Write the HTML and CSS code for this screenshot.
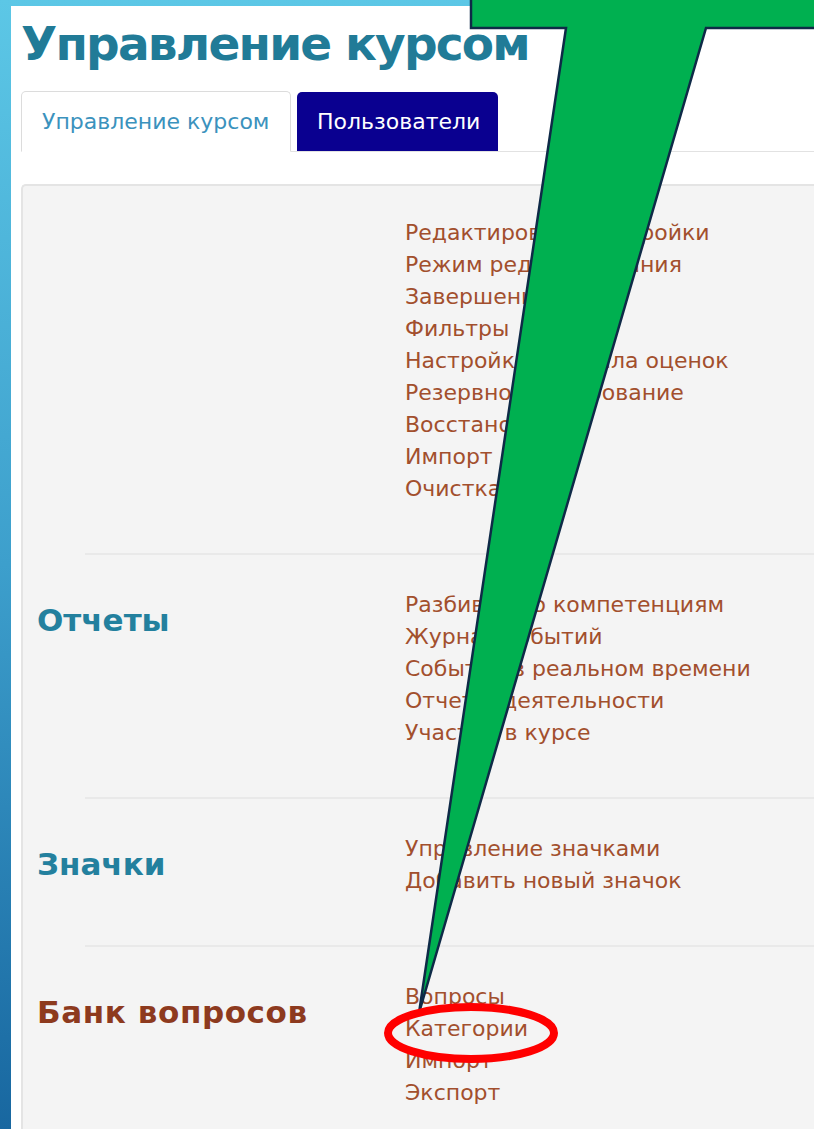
FILE: index.html
```html
<!DOCTYPE html>
<html lang="ru">
<head>
<meta charset="utf-8">
<title>Управление курсом</title>
<link rel="stylesheet" href="styles.css">
</head>
<body>
<div class="page">
  <h1 class="page-title">Управление курсом</h1>

  <nav class="tabs">
    <a class="tab tab-active" href="#">Управление курсом</a>
    <a class="tab tab-dark" href="#">Пользователи</a>
  </nav>

  <div class="panel">
    <section class="group group-first">
      <h3 class="group-head"></h3>
      <ul class="links">
        <li><a href="#">Редактировать настройки</a></li>
        <li><a href="#">Режим редактирования</a></li>
        <li><a href="#">Завершение курса</a></li>
        <li><a href="#">Фильтры</a></li>
        <li><a href="#">Настройки журнала оценок</a></li>
        <li><a href="#">Резервное копирование</a></li>
        <li><a href="#">Восстановить</a></li>
        <li><a href="#">Импорт</a></li>
        <li><a href="#">Очистка</a></li>
      </ul>
    </section>
    <hr class="divider">
    <section class="group">
      <h3 class="group-head">Отчеты</h3>
      <ul class="links">
        <li><a href="#">Разбивка по компетенциям</a></li>
        <li><a href="#">Журнал событий</a></li>
        <li><a href="#">События в реальном времени</a></li>
        <li><a href="#">Отчет о деятельности</a></li>
        <li><a href="#">Участие в курсе</a></li>
      </ul>
    </section>
    <hr class="divider">
    <section class="group">
      <h3 class="group-head">Значки</h3>
      <ul class="links">
        <li><a href="#">Управление значками</a></li>
        <li><a href="#">Добавить новый значок</a></li>
      </ul>
    </section>
    <hr class="divider">
    <section class="group">
      <h3 class="group-head group-head-brown">Банк вопросов</h3>
      <ul class="links">
        <li><a href="#">Вопросы</a></li>
        <li><a href="#">Категории</a></li>
        <li><a href="#">Импорт</a></li>
        <li><a href="#">Экспорт</a></li>
      </ul>
    </section>
  </div>
</div>

<svg class="callout" width="814" height="1129" viewBox="0 0 814 1129" aria-hidden="true">
  <!-- green pointer from the top bar down to the "Категории" link -->
  <path d="M471 -4 L471 28 L566 28 L419 1013 L706 28 L820 28 L820 -4 Z"
        fill="#00b050" stroke="#0e2a47" stroke-width="2.5" stroke-linejoin="miter"/>
  <!-- red ring around the link -->
  <ellipse cx="471" cy="1033" rx="83" ry="26" fill="none" stroke="#ff0000" stroke-width="8"/>
</svg>
</body>
</html>
```

FILE: styles.css
```css
html, body {
  margin: 0;
  padding: 0;
}

body {
  position: relative;
  height: 1129px;
  overflow: hidden;
  background: linear-gradient(to bottom, #5cc7e6 0%, #3d9fcc 50%, #1867a0 100%);
  font-family: "DejaVu Sans", Verdana, sans-serif;
}

.page {
  margin: 6px 0 0 11px;
  height: 1123px;
  background: #ffffff;
  padding: 0 0 0 10px;
}

.page-title {
  margin: 0;
  padding-top: 8px;
  font-size: 47px;
  letter-spacing: -1.8px;
  line-height: 60px;
  font-weight: bold;
  color: #217b97;
}

.tabs {
  display: flex;
  gap: 6px;
  margin-top: 17px;
  height: 60px;
  border-bottom: 1px solid #e2e2e2;
}

.tab {
  display: flex;
  align-items: center;
  box-sizing: border-box;
  height: 61px;
  padding: 0 20px;
  font-size: 22px;
  text-decoration: none;
  border-radius: 5px 5px 0 0;
}

.tab-active {
  width: 270px;
  color: #3b92bd;
  background: #ffffff;
  border: 1px solid #dcdcdc;
  border-bottom-color: #ffffff;
}

.tab-dark {
  width: 201px;
  height: 59px;
  margin-top: 1px;
  color: #ffffff;
  background: #0a0090;
}

.panel {
  margin-top: 32px;
  background: #f4f4f4;
  border: 2px solid #e4e4e4;
  border-right: none;
  border-bottom: none;
  border-radius: 5px 0 0 0;
  padding: 0 0 0 14px;
}

.group {
  display: grid;
  grid-template-columns: 368px 1fr;
  padding: 34px 0 48px;
}

.group-first {
  padding-top: 31px;
}

.divider {
  margin: 0 0 0 48px;
  border: none;
  border-top: 2px solid #e9e9e9;
  height: 0;
}

.group-head {
  margin: 0;
  padding-top: 14px;
  font-size: 31px;
  line-height: 34px;
  font-weight: bold;
  color: #23809e;
}

.group-head-brown {
  color: #8d3a1e;
  letter-spacing: 0.6px;
}

.links {
  list-style: none;
  margin: 0;
  padding: 0;
}

.links li {
  font-size: 22px;
  line-height: 32px;
}

.links a {
  color: #a24f2d;
  text-decoration: none;
}

.callout {
  position: absolute;
  left: 0;
  top: 0;
  pointer-events: none;
}
```
